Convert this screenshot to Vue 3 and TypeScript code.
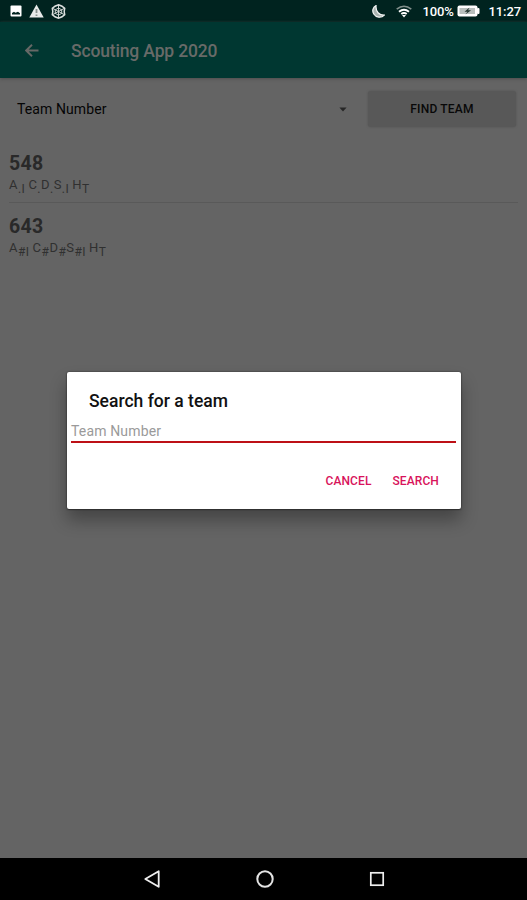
<script setup lang="ts">
interface Part {
  label: string
  sub: string
  gap?: boolean
}
interface Team {
  number: string
  parts: Part[]
}

const teams: Team[] = [
  {
    number: '548',
    parts: [
      { label: 'A', sub: '.I', gap: true },
      { label: 'C', sub: '.' },
      { label: 'D', sub: '.' },
      { label: 'S', sub: '.I', gap: true },
      { label: 'H', sub: 'T' },
    ],
  },
  {
    number: '643',
    parts: [
      { label: 'A', sub: '#I', gap: true },
      { label: 'C', sub: '#' },
      { label: 'D', sub: '#' },
      { label: 'S', sub: '#I', gap: true },
      { label: 'H', sub: 'T' },
    ],
  },
]
</script>

<template>
  <div class="screen">
    <header class="status">
      <div class="notices">
        <svg width="12" height="12" viewBox="0 0 12 12">
          <rect x="0.5" y="0.5" width="11" height="11" rx="1" fill="#fff" />
          <path d="M2 9.5V8l2-1.2 1.5 1L8 6.7l2 1.5v1.3z" fill="#00231f" />
        </svg>
        <svg width="15" height="14" viewBox="0 0 15 14">
          <path d="M7.5 0.5 14.7 13.5H0.3z" fill="#e8eae9" />
          <path d="M7.5 5v4M7.5 10.5v1.5" stroke="#87908d" stroke-width="1.8" />
        </svg>
        <svg width="15" height="15" viewBox="0 0 15 15" fill="none" stroke="#dce1df" stroke-width="1.5">
          <path d="M7.5 0.8 11 2.2 13.7 4.4 13.2 7.5 13.7 10.6 11 12.8 7.5 14.2 4 12.8 1.3 10.6 1.8 7.5 1.3 4.4 4 2.2z" />
          <path d="M7.5 1v13M1.8 4.4l11.4 6.2M13.2 4.4 1.8 10.6M7.5 4l3.2 1.8v3.6l-3.2 1.8-3.2-1.8V5.8z" stroke-width="0.9" />
        </svg>
      </div>
      <div class="system">
        <svg class="moon" width="13" height="13" viewBox="0 0 13 13">
          <path d="M4 0.7C0.8 2.2-.1 6 1.8 9c2.2 3.5 7.3 4.4 10.5 1.1C7.2 10.2 3.5 6.7 4 0.7z" fill="#aab3b0" stroke="#f2f4f3" stroke-width="1.3" />
        </svg>
        <svg class="wifi" width="16" height="13" viewBox="0 0 16 13" fill="none" stroke="#fff">
          <path d="M0.7 4.2Q8-1.7 15.3 4.2" stroke="#83918d" stroke-width="1.6" />
          <path d="M3 6.8Q8 2.7 13 6.8M5.3 9.1Q8 7 10.7 9.1" stroke-width="1.9" />
          <path d="m6 10 2 2.5 2-2.5z" fill="#fff" stroke="none" />
        </svg>
        <span class="percent">100%</span>
        <svg class="battery" width="23" height="12" viewBox="0 0 23 12">
          <rect x="0.5" y="0.5" width="20" height="11" rx="2" fill="#fff" />
          <rect x="20" y="3" width="2.5" height="6" rx="1" fill="#fff" />
          <rect x="2.5" y="3" width="15.5" height="6" fill="#b9c0be" />
          <path d="m12.5 2.5-5 4.2h3L8.3 9.5l5.8-4.3h-3z" fill="#24352f" />
        </svg>
        <span class="clock">11:27</span>
      </div>
    </header>

    <div class="toolbar">
      <svg width="14" height="14" viewBox="0 0 14 14" fill="none" stroke="#666866" stroke-width="1.9">
        <path d="M13.5 6.5H1.4M7 0.8 1.2 6.5 7 12.2" />
      </svg>
      <h1>Scouting App 2020</h1>
    </div>

    <main class="content">
      <div class="filter">
        <div class="spinner">
          <span>Team Number</span>
          <svg width="8" height="5" viewBox="0 0 8 5"><path d="M0.4 0.5h7.2L4 4.4z" fill="#262626" /></svg>
        </div>
        <button class="find">FIND TEAM</button>
      </div>
      <section v-for="team in teams" :key="team.number" class="team">
        <h2>{{ team.number }}</h2>
        <p><span v-for="(part, i) in team.parts" :key="i" :class="{ gap: part.gap }">{{ part.label }}<sub>{{ part.sub }}</sub></span></p>
      </section>

      <div class="overlay">
        <div class="dialog">
          <h3>Search for a team</h3>
          <div class="field">Team Number</div>
          <div class="actions">
            <button class="cancel">CANCEL</button>
            <button class="search">SEARCH</button>
          </div>
        </div>
      </div>
    </main>

    <nav class="navbar">
      <svg width="18" height="20" viewBox="0 0 18 20"><path d="M15.7 2.2v15.6L2.3 10z" fill="none" stroke="#eee" stroke-width="1.8" stroke-linejoin="round" /></svg>
      <svg width="20" height="20" viewBox="0 0 20 20"><circle cx="10" cy="10" r="7.7" fill="none" stroke="#e4e4e4" stroke-width="2" /></svg>
      <svg width="16" height="16" viewBox="0 0 16 16"><rect x="1.8" y="1.8" width="12.4" height="12.4" fill="none" stroke="#eee" stroke-width="1.7" /></svg>
    </nav>
  </div>
</template>

<style>
body {
  margin: 0;
  background: #646464;
}
</style>

<style scoped>
.screen {
  width: 527px;
  height: 900px;
  display: flex;
  flex-direction: column;
  overflow: hidden;
  background: #646464;
  font-family: Roboto, "Liberation Sans", sans-serif;
}
h1, h2, h3, p { margin: 0; }
svg { display: block; flex: none; }
button {
  border: 0;
  padding: 0;
  font-family: inherit;
  background: none;
}
.status {
  height: 22px;
  flex: none;
  box-sizing: border-box;
  padding: 0 6px 0 10px;
  display: flex;
  justify-content: space-between;
  align-items: center;
  background: #00231f;
  color: #fff;
}
.notices { display: flex; align-items: center; gap: 7px; }
.system { display: flex; align-items: center; }
.wifi { margin-left: 11px; }
.percent {
  margin-left: 11px;
  font-size: 13px;
  font-weight: 500;
  letter-spacing: -0.2px;
}
.battery { margin-left: 3px; }
.clock {
  margin-left: 9px;
  font-size: 13px;
  font-weight: 500;
  letter-spacing: -0.1px;
}
.toolbar {
  height: 56px;
  flex: none;
  box-sizing: border-box;
  padding: 1px 0 0 25px;
  display: flex;
  align-items: center;
  gap: 32px;
  background: #003731;
  box-shadow: 0 1px 3px #4d4d4d;
}
.toolbar h1 {
  font-size: 17.5px;
  line-height: 22px;
  font-weight: 500;
  letter-spacing: -0.15px;
  color: #686a68;
}
.content {
  position: relative;
  flex: 1;
}
.filter {
  height: 62px;
  display: flex;
  padding: 0 11px 0 17px;
  align-items: center;
}
.spinner {
  flex: 1;
  display: flex;
  align-items: center;
  justify-content: space-between;
  padding-right: 21px;
  font-size: 14px;
  letter-spacing: 0.1px;
  color: #050505;
}
.find {
  width: 148px;
  height: 36px;
  border-radius: 3px;
  background: #585858;
  box-shadow: 0 0 2px #515151;
  font-size: 12px;
  font-weight: 500;
  letter-spacing: 0.2px;
  color: #080808;
}
.team {
  height: 62px;
  box-sizing: border-box;
  margin: 0 9px;
  padding-top: 12px;
}
.team + .team {
  height: 64px;
  border-top: 1px solid #595959;
}
.team h2 {
  font-size: 19.5px;
  line-height: 23px;
  font-weight: 700;
  letter-spacing: 0.3px;
  color: #292929;
}
.team p {
  font-size: 13px;
  line-height: 19px;
  letter-spacing: 0.45px;
  color: #303030;
}
.team sub {
  font-size: 12px;
  line-height: 0;
  letter-spacing: 0.5px;
}
.gap { margin-right: 3px; }
.overlay {
  position: absolute;
  left: 67px;
  top: 293.5px;
  width: 394px;
}
.dialog {
  height: 137px;
  box-sizing: border-box;
  padding: 18px 5px 0 4px;
  border-radius: 2px;
  background: #fff;
  box-shadow: 0 0 2px #222, 0 1px 1px #333, 0 11px 17px rgba(0, 0, 0, 0.32);
}
.dialog h3 {
  padding-left: 18px;
  font-size: 17.5px;
  line-height: 22px;
  font-weight: 500;
  color: #111;
}
.field {
  height: 31px;
  box-sizing: border-box;
  padding: 9px 0 0;
  border-bottom: 2px solid #bd1016;
  font-size: 14px;
  line-height: 20px;
  letter-spacing: 0.15px;
  color: #9a9a9a;
}
.actions {
  margin-top: 28px;
  padding-right: 17px;
  display: flex;
  justify-content: flex-end;
  gap: 21px;
}
.actions button {
  font-size: 12px;
  line-height: 20px;
  font-weight: 500;
  letter-spacing: 0.1px;
  color: #d8135b;
}
.navbar {
  height: 42px;
  flex: none;
  display: flex;
  align-items: center;
  justify-content: center;
  gap: 94px;
  background: #000;
}
</style>
